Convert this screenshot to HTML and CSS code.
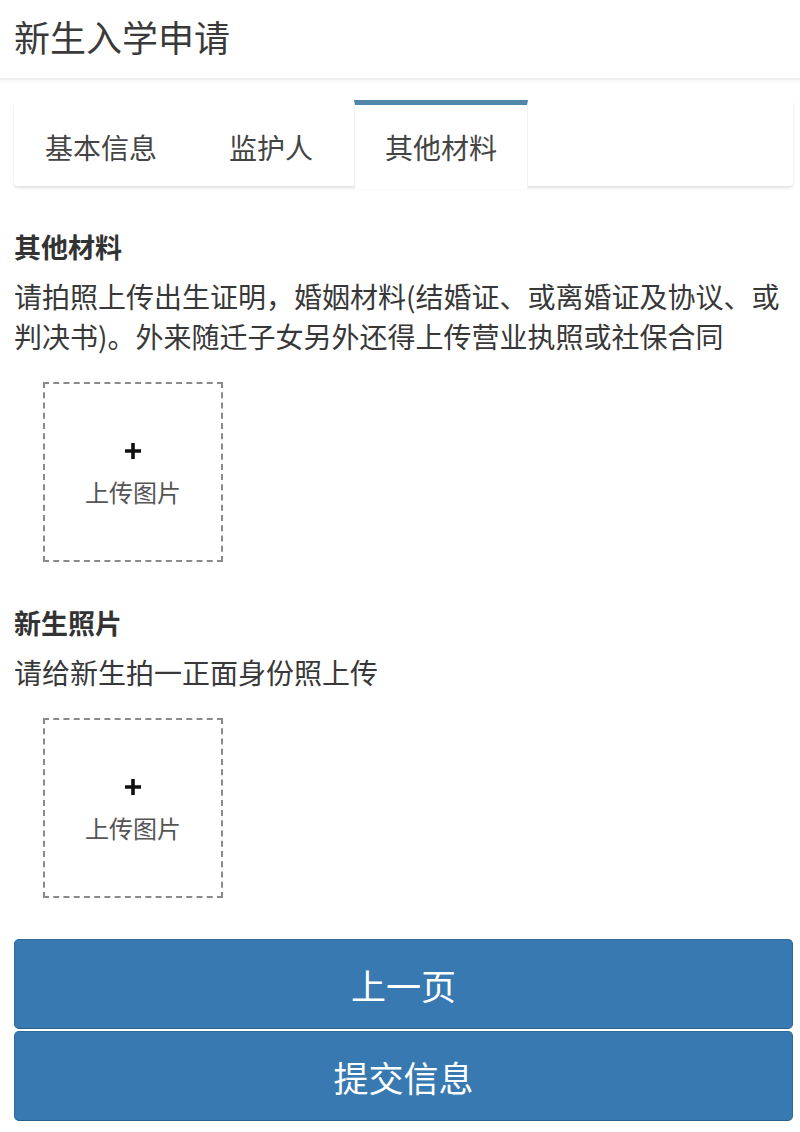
FILE: index.html
```html
<!DOCTYPE html>
<html lang="zh-CN">
<head>
<meta charset="utf-8">
<title>新生入学申请</title>
<link rel="stylesheet" href="styles.css">
</head>
<body>
<header class="header">
  <h1 class="header-title">新生入学申请</h1>
</header>
<div class="page">
  <nav class="tabs">
    <div class="tab">基本信息</div>
    <div class="tab">监护人</div>
    <div class="tab tab-active">其他材料</div>
  </nav>

  <section class="section">
    <h2 class="section-title">其他材料</h2>
    <p class="section-desc">请拍照上传出生证明，婚姻材料(结婚证、或离婚证及协议、或判决书)。外来随迁子女另外还得上传营业执照或社保合同</p>
    <div class="uploader">
      <div class="upload-box">
        <svg class="plus" width="18" height="18" viewBox="0 0 18 18"><path d="M9 1v16M1 9h16" stroke="#111" stroke-width="3.6" fill="none"/></svg>
        <span class="upload-label">上传图片</span>
      </div>
    </div>
  </section>

  <section class="section">
    <h2 class="section-title">新生照片</h2>
    <p class="section-desc">请给新生拍一正面身份照上传</p>
    <div class="uploader">
      <div class="upload-box">
        <svg class="plus" width="18" height="18" viewBox="0 0 18 18"><path d="M9 1v16M1 9h16" stroke="#111" stroke-width="3.6" fill="none"/></svg>
        <span class="upload-label">上传图片</span>
      </div>
    </div>
  </section>

  <div class="actions">
    <button class="btn">上一页</button>
    <button class="btn">提交信息</button>
  </div>
</div>
</body>
</html>
```

FILE: styles.css
```css
* {
  box-sizing: border-box;
}

html, body {
  margin: 0;
  padding: 0;
  background: #fff;
}

body {
  font-family: "Noto Sans CJK SC", "Noto Sans", sans-serif;
  color: #333;
}

.header {
  height: 80px;
  padding-left: 14px;
  border-bottom: 2px solid #f0f0f0;
  box-shadow: 0 2px 4px rgba(0, 0, 0, 0.03);
}

.header-title {
  margin: 0;
  font-size: 36px;
  font-weight: 400;
  line-height: 72px;
  color: #3a3a3a;
}

.page {
  padding: 0 7px 0 14px;
}

.tabs {
  display: flex;
  margin-top: 20px;
  height: 86px;
  background: #fff;
  border-radius: 4px;
  box-shadow: 0 2px 3px rgba(0, 0, 0, 0.12);
}

.tab {
  padding: 4px 31px 0;
  margin-right: 10px;
  border-top: 5px solid transparent;
  font-size: 28px;
  line-height: 76px;
  color: #444;
  white-space: nowrap;
}

.tab-active {
  padding: 4px 30px 0;
  border-top-color: #4f86aa;
  border-left: 1px solid #f2f2f2;
  border-right: 1px solid #f2f2f2;
  background: #fff;
  height: 89px;
  position: relative;
  z-index: 1;
}

.section {
  margin-top: 42px;
}

.section-title {
  margin: 0;
  font-size: 27px;
  font-weight: 700;
  line-height: 38px;
  color: #333;
}

.section-desc {
  margin: 10px 0 0;
  font-size: 28px;
  line-height: 40px;
  color: #383838;
}

.uploader {
  padding: 26px 0 0 29px;
}

.upload-box {
  width: 180px;
  height: 180px;
  border: 2px dashed #8a8a8a;
  display: flex;
  flex-direction: column;
  align-items: center;
  justify-content: center;
  gap: 17px;
  padding-top: 5px;
}

.plus {
  display: block;
}

.upload-label {
  font-size: 24px;
  line-height: 30px;
  color: #555;
}

.actions {
  margin-top: 41px;
  display: flex;
  flex-direction: column;
  gap: 2px;
}

.btn {
  display: block;
  width: 100%;
  height: 90px;
  border: 1px solid #2e6a9b;
  border-bottom-color: #2a5f8c;
  border-radius: 5px;
  background: #3779b0;
  color: #fff;
  font-family: "Noto Sans CJK SC", "Noto Sans", sans-serif;
  font-size: 35px;
  line-height: 1;
  padding: 0;
}
```
